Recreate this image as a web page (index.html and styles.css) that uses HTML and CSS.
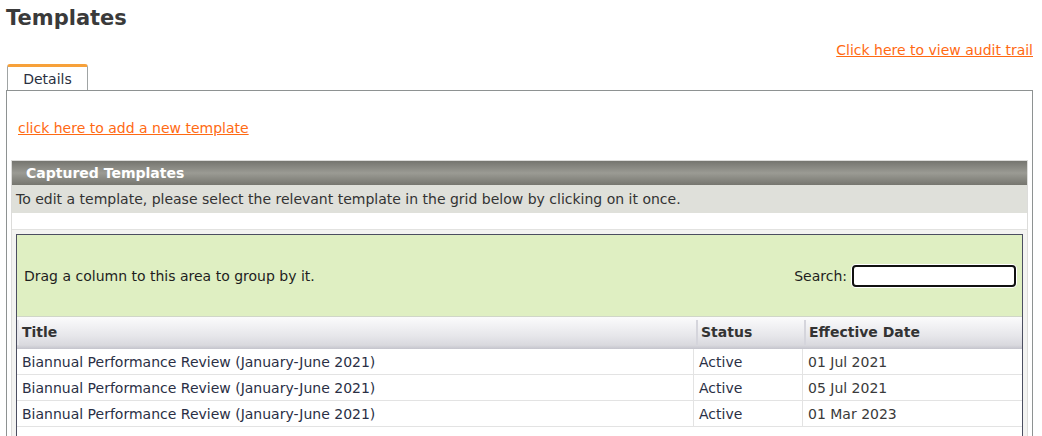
FILE: index.html
```html
<!DOCTYPE html>
<html>
<head>
<meta charset="utf-8">
<link rel="stylesheet" href="styles.css">
</head>
<body>
<h1 class="page-title">Templates</h1>
<div class="audit-row"><a class="link" href="#">Click here to view audit trail</a></div>
<div class="tabs"><div class="tab">Details</div></div>
<div class="panel">
  <div class="add-row"><a class="link" href="#">click here to add a new template</a></div>
  <div class="section">
    <div class="section-head">Captured Templates</div>
    <div class="section-desc">To edit a template, please select the relevant template in the grid below by clicking on it once.</div>
    <div class="section-gap"></div>
    <div class="section-body">
      <div class="grid">
        <div class="group-panel">
          <span>Drag a column to this area to group by it.</span>
          <label class="search">Search: <input class="search-input" type="text"></label>
        </div>
        <div class="row header">
          <div class="cell c-title">Title</div>
          <div class="cell c-status">Status</div>
          <div class="cell c-date">Effective Date</div>
        </div>
        <div class="row">
          <div class="cell c-title">Biannual Performance Review (January-June 2021)</div>
          <div class="cell c-status">Active</div>
          <div class="cell c-date">01 Jul 2021</div>
        </div>
        <div class="row">
          <div class="cell c-title">Biannual Performance Review (January-June 2021)</div>
          <div class="cell c-status">Active</div>
          <div class="cell c-date">05 Jul 2021</div>
        </div>
        <div class="row">
          <div class="cell c-title">Biannual Performance Review (January-June 2021)</div>
          <div class="cell c-status">Active</div>
          <div class="cell c-date">01 Mar 2023</div>
        </div>
        <div class="row empty"></div>
      </div>
    </div>
  </div>
</div>
</body>
</html>
```
FILE: styles.css
```css
html, body { margin: 0; padding: 0; background: #fff; }
body {
  font-family: "DejaVu Sans", Verdana, sans-serif;
  font-size: 14px;
  color: #333;
  padding: 0 9px 0 6px;
  overflow: hidden;
  height: 436px;
}
.page-title {
  margin: 0;
  padding: 5px 0 0 0;
  font-size: 21px;
  font-weight: bold;
  color: #3a3a3a;
  line-height: 26px;
}
.link { color: #ff6a13; text-decoration: underline; }
.audit-row {
  text-align: right;
  margin-top: 10px;
  line-height: 18px;
}
.tabs { display: flex; margin-top: 5px; padding-left: 1px; }
.tab {
  width: 79px;
  height: 23px;
  border: 1px solid #a0a4a4;
  border-top: 3px solid #f7a13a;
  border-bottom: none;
  border-radius: 3px 3px 0 0;
  text-align: center;
  line-height: 24px;
  color: #2a3040;
  background: #fff;
}
.panel {
  border: 1px solid #8e9292;
  border-bottom: none;
  padding: 0 4px 0 4px;
  height: 400px;
}
.add-row { padding: 27px 0 0 7px; line-height: 20px; }
.section {
  margin-top: 22px;
  border: 1px solid #dcdcda;
  border-bottom: none;
}
.section-head {
  height: 24px;
  line-height: 24px;
  padding-left: 14px;
  color: #fff;
  font-weight: bold;
  background: linear-gradient(#75756f, #9b9b94 50%, #76766f);
}
.section-desc {
  height: 28px;
  line-height: 28px;
  padding-left: 4px;
  background: #dfe0da;
  color: #333;
}
.section-gap { height: 16px; background: #fff; border-bottom: 1px solid #e2e2e0; }
.section-body { background: #f3f3f1; padding: 4px 4px 0 4px; }
.grid {
  border: 1px solid #4b4e60;
  border-bottom: none;
  background: #fff;
}
.group-panel {
  height: 81px;
  background: #dfefc2;
  border-bottom: 1px solid #d0d6c8;
  display: flex;
  align-items: center;
  justify-content: space-between;
  padding: 0 6px 0 7px;
  color: #1e1e1e;
}
.search { display: flex; align-items: center; gap: 5px; }
.search-input {
  width: 160px;
  height: 18px;
  padding: 0;
  border: 2px solid #111;
  border-radius: 4px;
  box-shadow: 0 0 0 1px #fff;
  background: #fff;
  margin: 0;
}
.row { display: flex; height: 25px; border-bottom: 1px solid #e3e3e3; }
.row.empty { border-bottom: none; height: 10px; }
.cell {
  box-sizing: border-box;
  height: 25px;
  padding-top: 2px;
  line-height: 23px;
  padding-left: 5px;
  white-space: nowrap;
  overflow: hidden;
  color: #2a2f45;
}
.c-title { width: 677px; border-right: 1px solid #e3e3e3; }
.c-status { width: 109px; border-right: 1px solid #e3e3e3; }
.c-date { flex: 1; color: #3a3a3a; }
.header {
  height: 32px;
  border-bottom: none;
  background: linear-gradient(#fbfbfc, #e6e6ea 60%, #d9d9de 88%, #c4c4cc);
}
.header .cell {
  font-weight: bold;
  color: #333;
  border-right: none;
  border-left: 2px solid #d5d5dc;
  margin-top: 3px;
  height: 25px;
  padding-top: 0;
  line-height: 25px;
  padding-left: 3px;
}
.header .c-title { border-left: 2px solid #e6e6ea; width: 679px; }
.header .c-status { width: 108px; }
```
